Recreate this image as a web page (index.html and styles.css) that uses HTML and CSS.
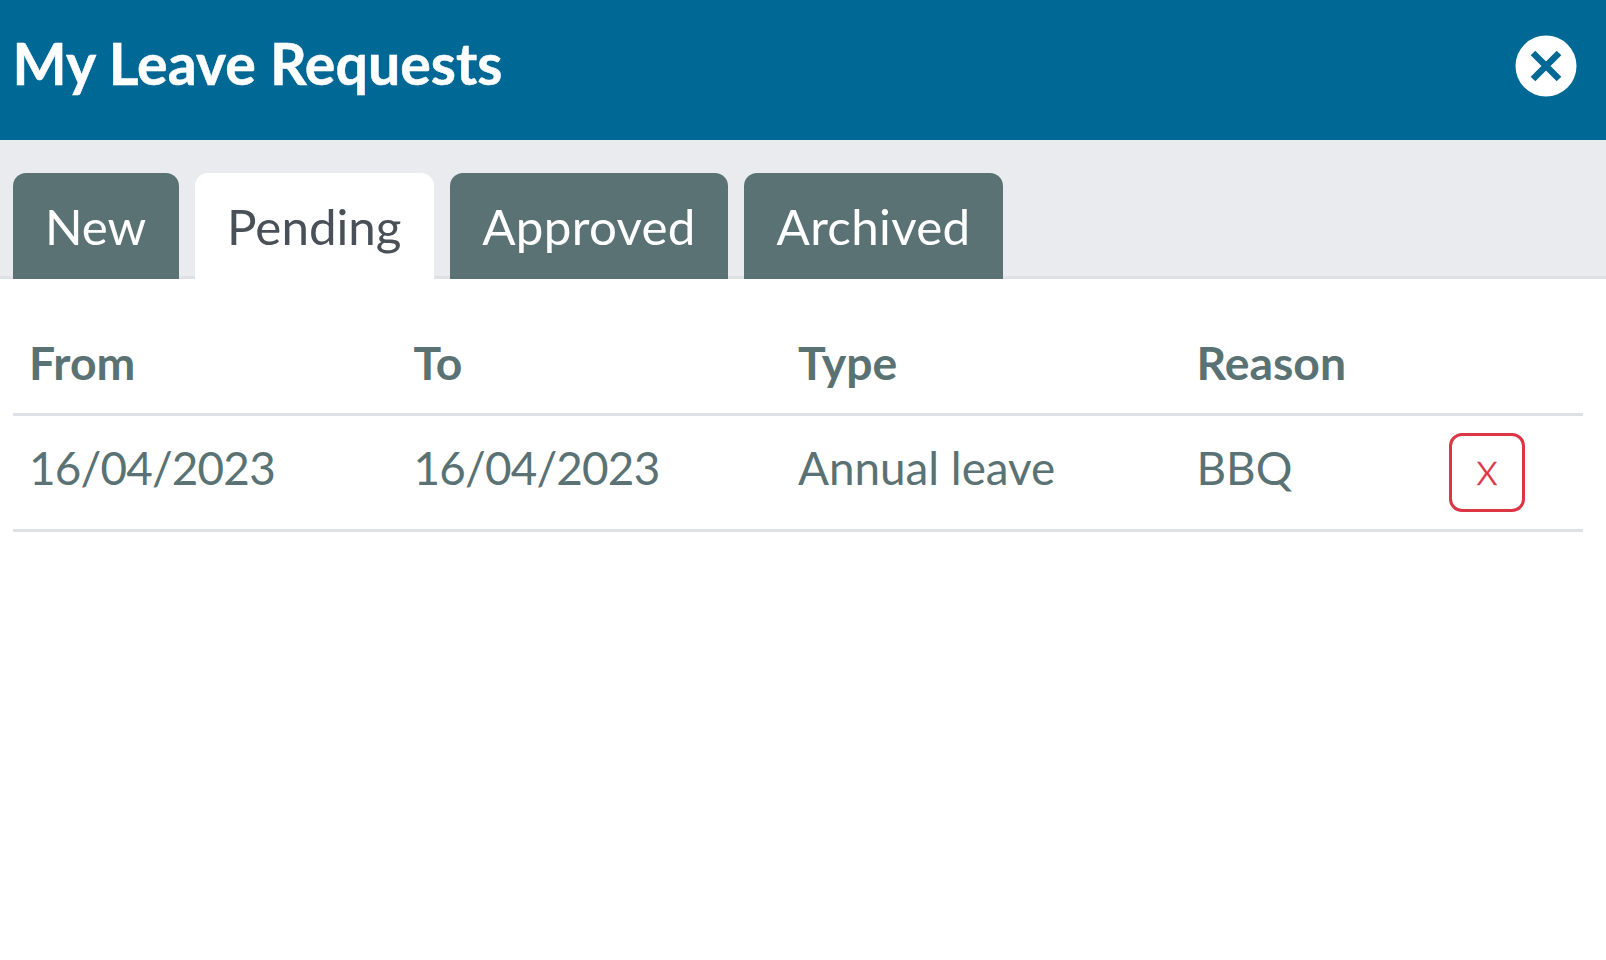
FILE: index.html
```html
<!DOCTYPE html>
<html lang="en">
<head>
<meta charset="utf-8">
<title>My Leave Requests</title>
<link rel="stylesheet" href="styles.css">
</head>
<body>
<header class="header">
  <h1 class="title">My Leave Requests</h1>
  <button class="close" aria-label="Close">
    <svg class="close-icon" viewBox="0 0 62 62"><circle cx="31" cy="31" r="30.5" fill="#fff"/><path d="M18 18L44 44M44 18L18 44" stroke="#006895" stroke-width="6.5" fill="none"/></svg>
  </button>
</header>
<nav class="tabs">
  <a class="tab">New</a>
  <a class="tab active">Pending</a>
  <a class="tab tab-wide">Approved</a>
  <a class="tab tab-wide">Archived</a>
</nav>
<main class="content">
  <table class="table">
    <colgroup><col class="c1"><col class="c2"><col class="c3"><col class="c4"><col class="c5"></colgroup>
    <thead>
      <tr><th>From</th><th>To</th><th>Type</th><th>Reason</th><th></th></tr>
    </thead>
    <tbody>
      <tr><td class="date">16/04/2023</td><td class="date">16/04/2023</td><td>Annual leave</td><td>BBQ</td><td class="action"><button class="cancel">x</button></td></tr>
    </tbody>
  </table>
</main>
</body>
</html>
```
FILE: styles.css
```css
* { box-sizing: border-box; }
html, body { margin: 0; padding: 0; height: 100%; background: #fff; overflow: hidden; }
body { font-family: Lato, sans-serif; color: #5a7273; }
.header { height: 140px; background: #006895; display: flex; align-items: center; justify-content: space-between; padding: 0 29px 8px 12.5px; }
.title { margin: 0 0 6px; font-size: 57.3px; font-weight: 700; color: #fff; line-height: 1.2; -webkit-text-stroke: 0.5px #fff; }
.close { width: 62px; height: 62px; padding: 0; border: 0; background: none; display: block; }
.close-icon { display: block; width: 62px; height: 62px; }
.tabs { height: 139px; background: #e9ebef; border-bottom: 3px solid #dee2e6; padding: 33px 12.5px 0; display: flex; gap: 16px; align-items: stretch; }
.tab { height: 106px; padding: 0 32.4px; background: #5a7273; color: #fff; font-size: 49.3px; line-height: 106px; border-radius: 13px 13px 0 0; }
.tab-wide { letter-spacing: 0.3px; }
.tab.active { background: #fff; color: #495057; }
.content { padding: 0 23px 0 12.5px; }
.table { width: 100%; border-collapse: collapse; table-layout: fixed; font-size: 45.8px; }
.c1, .c2 { width: 384.5px; }
.c3 { width: 398.5px; }
.c4 { width: 222px; }
th, td { text-align: left; padding: 0 16.5px; color: #5a7273; }
th { height: 135px; font-size: 46.3px; font-weight: 700; border-bottom: 3px solid #dee2e6; padding-top: 33px; }
td { height: 116px; font-weight: 400; border-bottom: 3px solid #dee2e6; padding-bottom: 9px; }
.date { letter-spacing: -0.8px; }
td.action { padding: 0 0 0 47px; }
.cancel { display: block; width: 76px; height: 79px; padding: 0 0 9px; background: #fff; border: 3px solid #dc3545; border-radius: 13px; color: #dc3545; font-family: Lato, sans-serif; font-size: 46px; font-weight: 300; line-height: 1; -webkit-text-stroke: 0.4px #dc3545; }
```
